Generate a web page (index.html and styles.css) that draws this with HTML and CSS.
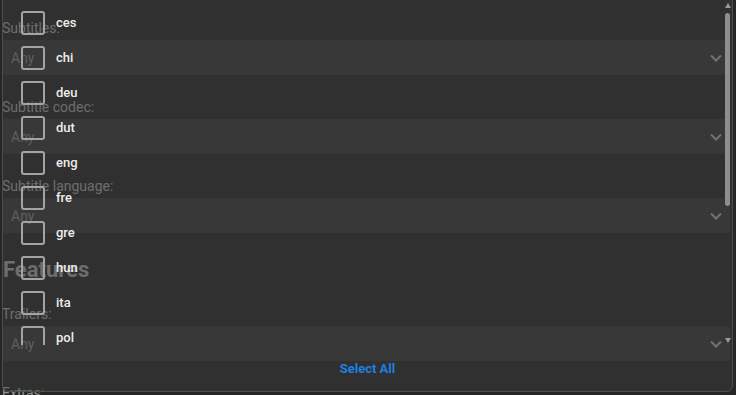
FILE: index.html
```html
<!DOCTYPE html>
<html lang="en">
<head>
    <meta charset="UTF-8">
    <meta name="viewport" content="width=device-width, initial-scale=1.0">
    <title>Filters</title>
    <link rel="stylesheet" href="styles.css">
</head>
<body>
    <div class="filters">
        <div class="field">
            <label>Subtitles:</label>
            <div class="select"><span>Any</span><svg class="chevron" viewBox="0 0 12 8"><path d="M1 1.5l5 5 5-5"/></svg></div>
        </div>
        <div class="field">
            <label>Subtitle codec:</label>
            <div class="select"><span>Any</span><svg class="chevron" viewBox="0 0 12 8"><path d="M1 1.5l5 5 5-5"/></svg></div>
        </div>
        <div class="field">
            <label>Subtitle language:</label>
            <div class="select"><span>Any</span><svg class="chevron" viewBox="0 0 12 8"><path d="M1 1.5l5 5 5-5"/></svg></div>
        </div>
        <h2>Features</h2>
        <div class="field">
            <label>Trailers:</label>
            <div class="select"><span>Any</span><svg class="chevron" viewBox="0 0 12 8"><path d="M1 1.5l5 5 5-5"/></svg></div>
        </div>
        <div class="field">
            <label>Extras:</label>
            <div class="select"><span>Any</span><svg class="chevron" viewBox="0 0 12 8"><path d="M1 1.5l5 5 5-5"/></svg></div>
        </div>
    </div>

    <div class="popup">
        <div class="popup-body">
            <ul class="options">
                <li><span class="box"></span>ces</li>
                <li><span class="box"></span>chi</li>
                <li><span class="box"></span>deu</li>
                <li><span class="box"></span>dut</li>
                <li><span class="box"></span>eng</li>
                <li><span class="box"></span>fre</li>
                <li><span class="box"></span>gre</li>
                <li><span class="box"></span>hun</li>
                <li><span class="box"></span>ita</li>
                <li><span class="box"></span>pol</li>
                <li><span class="box"></span>por</li>
            </ul>
            <div class="scrollbar">
                <span class="arrow up"></span>
                <span class="thumb"></span>
                <span class="track"></span>
                <span class="arrow down"></span>
            </div>
        </div>
        <div class="popup-footer">
            <button class="select-all">Select All</button>
        </div>
    </div>
</body>
</html>
```

FILE: styles.css
```css
body {
    margin: 0;
    background-color: #262626;
    font-family: Roboto, "Liberation Sans", sans-serif;
    overflow: hidden;
}
.filters {
    padding: 20px 6px 0 2px;
}
.field {
    margin-bottom: 24px;
}
.field label {
    display: block;
    font-size: 14px;
    line-height: 16px;
    color: #969696;
    margin-bottom: 4px;
}
.select {
    display: flex;
    align-items: center;
    justify-content: space-between;
    height: 35px;
    padding: 0 8px 0 9px;
    background-color: #343434;
    border-radius: 4px;
    color: #7c7c7c;
    font-size: 14px;
}
.chevron {
    width: 12px;
    height: 8px;
    fill: none;
    stroke: #a0a0a0;
    stroke-width: 2;
}
h2 {
    margin: 25px 0 24px 1px;
    font-size: 22px;
    line-height: 24px;
    color: #969696;
}

.popup {
    position: absolute;
    top: -1px;
    left: 2px;
    width: 729px;
    height: 391px;
    border: 1px solid #4e4e4e;
    border-radius: 0 0 6px 6px;
    background-color: rgba(60, 60, 60, 0.46);
    display: flex;
    flex-direction: column;
}
.popup-body {
    display: flex;
    height: 345px;
}
.options {
    flex: 1;
    list-style: none;
    margin: 0;
    padding: 5px 0 0 18px;
    overflow: hidden;
}
.options li {
    display: flex;
    align-items: center;
    gap: 11px;
    height: 35px;
    font-size: 13px;
    font-weight: 500;
    color: #ececec;
}
.box {
    width: 20px;
    height: 20px;
    border: 2px solid #a4a4a4;
    border-radius: 3px;
}
.scrollbar {
    width: 7px;
    margin-right: 1px;
    padding: 3px 0 2px;
    display: flex;
    flex-direction: column;
    align-items: center;
}
.arrow {
    width: 0;
    height: 0;
    border-left: 3px solid transparent;
    border-right: 3px solid transparent;
}
.arrow.up {
    border-bottom: 5px solid #9a9a9a;
}
.arrow.down {
    border-top: 5px solid #9a9a9a;
}
.thumb {
    width: 5px;
    height: 193px;
    margin-top: 5px;
    border-radius: 3px;
    background-color: #8e8e8e;
}
.track {
    flex: 1;
}
.popup-footer {
    flex: 1;
    display: flex;
    align-items: center;
    justify-content: center;
}
.select-all {
    background: none;
    border: none;
    padding: 4px 8px;
    font-family: Roboto, "Liberation Sans", sans-serif;
    font-size: 13px;
    font-weight: 700;
    color: #1f7fe0;
    cursor: pointer;
}
```
